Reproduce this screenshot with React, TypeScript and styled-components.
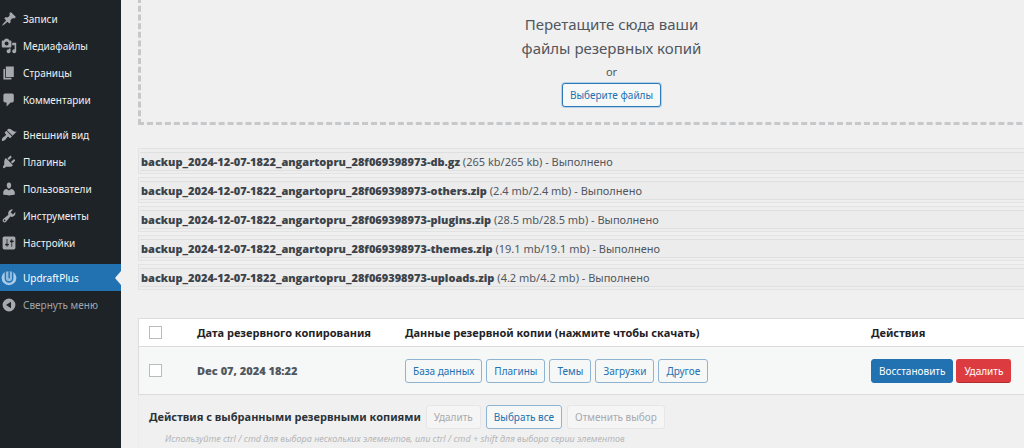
import React from "react";
import styled, { createGlobalStyle, css } from "styled-components";

const GlobalStyle = createGlobalStyle`
  *, *::before, *::after { box-sizing: border-box; }
  body {
    margin: 0;
    background: #f0f0f1;
    color: #50575e;
    font-family: "Noto Sans", "Open Sans", sans-serif;
    font-size: 11px;
    line-height: 16px;
  }
`;

const Page = styled.div`
  display: flex;
  min-height: 100vh;
  overflow: hidden;
`;

const Sidebar = styled.nav`
  flex: 0 0 121px;
  padding: 5px 0 8px;
  background: #1d2327;
  font-size: 10px;
`;

const MenuList = styled.ul`
  list-style: none;
  margin: 0 0 8px;
  padding: 0;
`;

const menuEntry = css`
  position: relative;
  display: flex;
  align-items: center;
  gap: 6px;
  width: 100%;
  height: 27px;
  padding: 0 0 0 1px;
  border: 0;
  font: inherit;
  text-decoration: none;
  white-space: nowrap;
`;

const MenuLink = styled.a<{ $current?: boolean }>`
  ${menuEntry}
  color: ${(p) => (p.$current ? "#fff" : "#f0f0f1")};
  background: ${(p) => (p.$current ? "#2271b1" : "transparent")};
  ${(p) =>
    p.$current &&
    css`
      &::after {
        content: "";
        position: absolute;
        right: 0;
        top: 7px;
        border: solid transparent;
        border-width: 7px 6px 7px 0;
        border-right-color: #f0f0f1;
      }
    `}
`;

const CollapseButton = styled.button`
  ${menuEntry}
  color: #a0a5aa;
  background: transparent;
`;

const MenuIcon = styled.svg<{ $tint?: string }>`
  flex: none;
  width: 16px;
  height: 16px;
  fill: ${(p) => p.$tint || "#a7aaad"};
`;

const Main = styled.main`
  flex: 1;
  min-width: 0;
  padding-left: 17px;
`;

const DropZone = styled.section`
  display: flex;
  flex-direction: column;
  align-items: center;
  margin: -3px -61px 0 0;
  padding: 12px 0 15px;
  border: 3px dashed #c7c8ca;
`;

const DropTitle = styled.p`
  width: 200px;
  margin: 0;
  font-size: 15px;
  line-height: 24px;
  text-align: center;
`;

const DropOr = styled.p`
  margin: 0;
  line-height: 23px;
`;

type Variant = "outline" | "primary" | "danger" | "disabled";

const variants = {
  outline: css`
    color: #2271b1;
    background: #f6f7f7;
    border-color: #8fb4d2;
  `,
  primary: css`
    color: #fff;
    background: #2271b1;
    border-color: #2271b1;
  `,
  danger: css`
    color: #fff;
    background: #dc3c40;
    border-color: #dc3c40 #dc3c40 #b32d2e;
  `,
  disabled: css`
    color: #a7aaad;
    background: #f5f5f6;
    border-color: #e6e6e8;
  `,
};

const Button = styled.button<{ $variant?: Variant; $focus?: boolean }>`
  height: 24px;
  padding: 0 7px;
  border: 1px solid;
  border-radius: 3px;
  font: inherit;
  font-size: 10px;
  line-height: 20px;
  white-space: nowrap;
  ${(p) => variants[p.$variant || "outline"]}
  ${(p) =>
    p.$focus &&
    css`
      border-color: #2f79b6;
      box-shadow: 0 0 0 1px #b4d3ea;
    `}
`;

const FileList = styled.ul`
  list-style: none;
  margin: 23px 0 28px;
  padding: 0;
`;

const FileFrame = styled.li`
  height: 26px;
  margin-bottom: 3px;
  padding: 3px 0 3px 1px;
  border: 1px solid #e2e3e3;
  border-right: 0;
  background: #eeeeef;
`;

const FileEntry = styled.div`
  padding-left: 1px;
  border: 1px solid #dedfdf;
  border-width: 1px 0 1px;
  background: #ececec;
  line-height: 17px;
  white-space: nowrap;
`;

const HeavyText = styled.strong`
  font-family: "Open Sans", "Noto Sans", sans-serif;
  font-weight: 800;
`;

const FileName = styled(HeavyText)`
  color: #3c434a;
`;

const BackupTable = styled.table`
  width: 100%;
  border: 1px solid #dcdcde;
  border-right: 0;
  border-spacing: 0;
  background: #fff;
  table-layout: fixed;
  text-align: left;

  th, td { padding: 0; white-space: nowrap; }
  thead th { height: 28px; border-bottom: 1px solid #dcdcde; color: #1d2327; }
  tbody td { height: 47px; background: #f6f7f7; }
`;

const Column = styled.col<{ $width?: number }>`
  width: ${(p) => (p.$width ? p.$width + "px" : "auto")};
`;

const Checkbox = styled.input`
  appearance: none;
  display: block;
  width: 13px;
  height: 13px;
  margin: 0 0 0 10px;
  border: 1px solid #b9bbbe;
  background: #fff;
`;

const ButtonRow = styled.div<{ $gap: number }>`
  display: flex;
  gap: ${(p) => p.$gap}px;
`;

const BulkPanel = styled.section`
  padding: 10px 0 0 10px;
  border-left: 1px solid #ebebec;
  background: #f0f0f0;
`;

const BulkRow = styled.div`
  display: flex;
  align-items: center;
  gap: 5px;
`;

const BulkLabel = styled.strong`
  color: #2c3338;
  white-space: nowrap;
`;

const Hint = styled.p`
  margin: 2px 0 0 16px;
  color: #b4b6b8;
  font-size: 9px;
  font-style: italic;
`;

const icons = {
  post: "M10.44 3.02l1.82-1.82 6.36 6.35-1.83 1.82c-1.05-.68-2.48-.57-3.41.36l-.75.75c-.92.93-1.04 2.35-.35 3.41l-1.83 1.82-2.41-2.41-2.8 2.79c-.42.42-3.38 2.71-3.8 2.29s1.86-3.39 2.28-3.81l2.79-2.79L4.1 9.36l1.83-1.82c1.05.69 2.48.57 3.4-.36l.75-.75c.93-.92 1.05-2.35.36-3.41z",
  media: "M13 11V4c0-.55-.45-1-1-1h-1.67L9 1H5L3.67 3H2c-.55 0-1 .45-1 1v7c0 .55.45 1 1 1h10c.55 0 1-.45 1-1zM7 4.5c1.38 0 2.5 1.12 2.5 2.5S8.38 9.5 7 9.5 4.5 8.38 4.5 7 5.62 4.5 7 4.5zM14 6h5v10.5c0 1.38-1.12 2.5-2.5 2.5S14 17.88 14 16.5s1.12-2.5 2.5-2.5c.17 0 .34.02.5.05V9h-3V6zm-4 8.05V13h2v3.5c0 1.38-1.12 2.5-2.5 2.5S7 17.88 7 16.5 8.12 14 9.5 14c.17 0 .34.02.5.05z",
  page: "M6 15V2h10v13H6zm-1 1h8v2H3V5h2v11z",
  comments: "M5 2h9c1.1 0 2 .9 2 2v7c0 1.1-.9 2-2 2h-2l-5 5v-5H5c-1.1 0-2-.9-2-2V4c0-1.1.9-2 2-2z",
  appearance: "M14.48 11.06L7.41 3.99l1.5-1.5c.5-.56 2.3-.47 3.51.32 1.21.8 1.43 1.28 2.91 2.1 1.18.64 2.45 1.26 4.45.85zm-.71.71L6.7 4.7 4.93 6.47c-.39.39-.39 1.02 0 1.41l1.06 1.06c.39.39.39 1.03 0 1.42-.6.6-1.43 1.11-2.21 1.69-.35.26-.7.53-1.01.84C1.43 14.23.4 16.08 1.4 17.07c.99 1 2.84-.03 4.18-1.36.31-.31.58-.66.85-1.02.57-.78 1.08-1.61 1.69-2.21.39-.39 1.02-.39 1.41 0l1.06 1.06c.39.39 1.02.39 1.41 0z",
  plugins: "M13.11 4.36L9.87 7.6 8 5.73l3.24-3.24c.35-.34 1.05-.2 1.56.32.52.51.66 1.21.31 1.55zm-8 1.77l.91-1.12 9.01 9.01-1.19.84c-.71.71-2.63 1.16-3.82 1.16H6.14L4.9 17.26c-.59.59-1.54.59-2.12 0-.59-.58-.59-1.53 0-2.12l1.24-1.24v-3.88c0-1.13.4-3.19 1.09-3.89zm7.26 3.97l3.24-3.24c.34-.35 1.04-.21 1.55.31.52.51.66 1.21.31 1.55l-3.24 3.25z",
  users: "M10 9.25c-2.27 0-2.73-3.44-2.73-3.44C7 4.02 7.82 2 9.97 2c2.16 0 2.98 2.02 2.71 3.81 0 0-.41 3.44-2.68 3.44zm0 2.57L12.72 10c2.39 0 4.52 2.33 4.52 4.53v2.49s-3.65 1.13-7.24 1.13c-3.65 0-7.24-1.13-7.24-1.13v-2.49c0-2.25 1.94-4.48 4.47-4.48z",
  tools: "M16.68 9.77c-1.34 1.34-3.3 1.67-4.95.99l-5.41 6.52c-.99.99-2.59.99-3.58 0s-.99-2.59 0-3.57l6.52-5.42c-.68-1.65-.35-3.61.99-4.95 1.28-1.28 3.12-1.62 4.72-1.06l-2.89 2.89 2.82 2.82 2.86-2.87c.53 1.58.18 3.39-1.08 4.65zM3.81 16.21c.4.39 1.04.39 1.43 0 .4-.4.4-1.04 0-1.43-.39-.4-1.03-.4-1.43 0-.39.39-.39 1.03 0 1.43z",
  settings: "M18 16V4c0-1.1-.9-2-2-2H4c-1.1 0-2 .9-2 2v12c0 1.1.9 2 2 2h12c1.1 0 2-.9 2-2zM8 11h1c.55 0 1 .45 1 1s-.45 1-1 1H8v1.5c0 .28-.22.5-.5.5s-.5-.22-.5-.5V13H6c-.55 0-1-.45-1-1s.45-1 1-1h1V5.5c0-.28.22-.5.5-.5s.5.22.5.5V11zm5-2h-1c-.55 0-1-.45-1-1s.45-1 1-1h1V5.5c0-.28.22-.5.5-.5s.5.22.5.5V7h1c.55 0 1 .45 1 1s-.45 1-1 1h-1v5.5c0 .28-.22.5-.5.5s-.5-.22-.5-.5V9z",
};

type IconName = keyof typeof icons;

const contentMenu: [IconName, string][] = [
  ["post", "Записи"],
  ["media", "Медиафайлы"],
  ["page", "Страницы"],
  ["comments", "Комментарии"],
];

const adminMenu: [IconName, string][] = [
  ["appearance", "Внешний вид"],
  ["plugins", "Плагины"],
  ["users", "Пользователи"],
  ["tools", "Инструменты"],
  ["settings", "Настройки"],
];

const files = [
  { part: "db.gz", size: "265 kb" },
  { part: "others.zip", size: "2.4 mb" },
  { part: "plugins.zip", size: "28.5 mb" },
  { part: "themes.zip", size: "19.1 mb" },
  { part: "uploads.zip", size: "4.2 mb" },
];

const parts = ["База данных", "Плагины", "Темы", "Загрузки", "Другое"];

function MenuGroup({ items }: { items: [IconName, string][] }) {
  return (
    <MenuList>
      {items.map(([icon, label]) => (
        <li key={label}>
          <MenuLink href="#">
            <MenuIcon viewBox="0 0 20 20" aria-hidden="true">
              <path d={icons[icon]} />
            </MenuIcon>
            {label}
          </MenuLink>
        </li>
      ))}
    </MenuList>
  );
}

export default function App() {
  return (
    <Page>
      <GlobalStyle />
      <Sidebar>
        <MenuGroup items={contentMenu} />
        <MenuGroup items={adminMenu} />
        <MenuLink href="#" $current aria-current="page">
          <MenuIcon viewBox="0 0 20 20" $tint="#a9cbe8" aria-hidden="true">
            <path d="M4.6 2.4A9.2 9.2 0 1 0 15.4 2.4V10.6A5.4 5.4 0 0 1 4.6 10.6Z" />
            <path d="M6.2 2H13.8V10.4A3.8 3.8 0 0 1 6.2 10.4Z" fill="#8dbbe0" />
            <path d="M9.2 1.6H11.2V9.6A1 1 0 0 1 9.2 9.6Z" fill="#2f79b6" />
          </MenuIcon>
          UpdraftPlus
        </MenuLink>
        <CollapseButton type="button">
          <MenuIcon viewBox="0 0 20 20" aria-hidden="true">
            <path fillRule="evenodd" d="M10 2a8 8 0 1 0 0 16a8 8 0 0 0 0-16zM12.5 5.8V14.2L6.3 10z" />
          </MenuIcon>
          Свернуть меню
        </CollapseButton>
      </Sidebar>
      <Main>
        <DropZone>
          <DropTitle>Перетащите сюда ваши файлы резервных копий</DropTitle>
          <DropOr>or</DropOr>
          <Button type="button" $focus>
            Выберите файлы
          </Button>
        </DropZone>
        <FileList>
          {files.map((file) => (
            <FileFrame key={file.part}>
              <FileEntry>
                <FileName>backup_2024-12-07-1822_angartopru_28f069398973-{file.part}</FileName>{" "}
                ({file.size}/{file.size}) - Выполнено
              </FileEntry>
            </FileFrame>
          ))}
        </FileList>
        <BackupTable>
          <colgroup>
            <Column $width={58} />
            <Column $width={208} />
            <Column $width={466} />
            <Column />
          </colgroup>
          <thead>
            <tr>
              <th scope="col">
                <Checkbox type="checkbox" aria-label="Выбрать все" />
              </th>
              <th scope="col">Дата резервного копирования</th>
              <th scope="col">Данные резервной копии (нажмите чтобы скачать)</th>
              <th scope="col">Действия</th>
            </tr>
          </thead>
          <tbody>
            <tr>
              <td>
                <Checkbox type="checkbox" aria-label="Dec 07, 2024 18:22" />
              </td>
              <td>
                <HeavyText>Dec 07, 2024 18:22</HeavyText>
              </td>
              <td>
                <ButtonRow $gap={4}>
                  {parts.map((part) => (
                    <Button type="button" key={part}>
                      {part}
                    </Button>
                  ))}
                </ButtonRow>
              </td>
              <td>
                <ButtonRow $gap={3}>
                  <Button type="button" $variant="primary">
                    Восстановить
                  </Button>
                  <Button type="button" $variant="danger">
                    Удалить
                  </Button>
                </ButtonRow>
              </td>
            </tr>
          </tbody>
        </BackupTable>
        <BulkPanel>
          <BulkRow>
            <BulkLabel>Действия с выбранными резервными копиями</BulkLabel>
            <Button type="button" $variant="disabled" disabled>
              Удалить
            </Button>
            <Button type="button">Выбрать все</Button>
            <Button type="button" $variant="disabled" disabled>
              Отменить выбор
            </Button>
          </BulkRow>
          <Hint>
            Используйте ctrl / cmd для выбора нескольких элементов, или ctrl / cmd + shift для выбора серии элементов
          </Hint>
        </BulkPanel>
      </Main>
    </Page>
  );
}
